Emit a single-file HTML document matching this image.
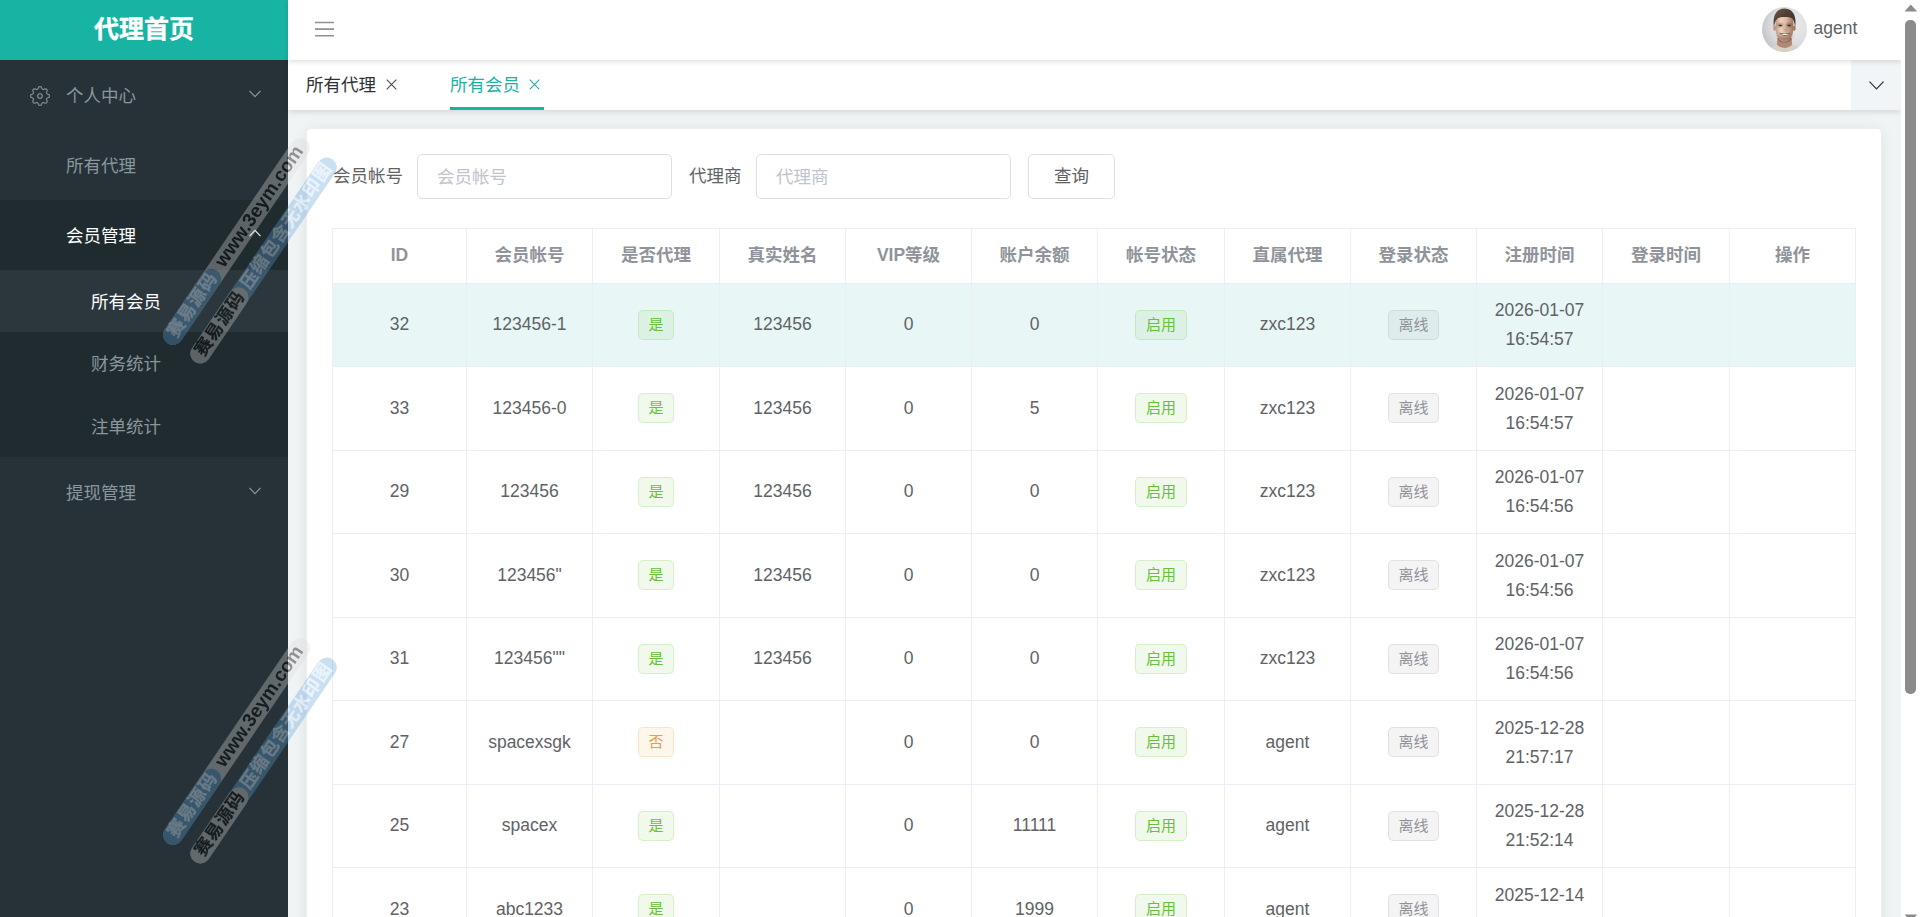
<!DOCTYPE html>
<html lang="zh-CN">
<head>
<meta charset="utf-8">
<title>代理首页</title>
<style>
*{box-sizing:border-box;margin:0;padding:0}
html,body{width:1920px;height:917px;overflow:hidden;background:#f1f4f5}
body{position:relative;font-family:"Liberation Sans","Noto Sans CJK SC",sans-serif;font-size:17.5px;color:#606266}
/* sidebar */
#side{position:absolute;left:0;top:0;width:288px;height:917px;background:#263238;overflow:hidden}
#brand{position:absolute;left:0;top:0;width:288px;height:60px;background:#17b3a3;color:#fff;font-weight:700;font-size:25px;line-height:60px;text-align:center}
#brand span{position:relative;top:-1.3px;-webkit-text-stroke:.35px #fff}
.mi{position:absolute;left:0;width:288px;color:#8a979e;font-size:17.5px;white-space:nowrap}
.mi b{font-weight:400;position:absolute;top:50%;transform:translateY(-50%);margin-top:-1px}
.mi svg{position:absolute}
.m1{height:70px}
.m2{height:62.5px;background:#202b30}
/* navbar */
#nav{position:absolute;left:288px;top:0;width:1613px;height:60px;background:#fff;z-index:3;box-shadow:0 2px 5px rgba(0,0,0,.12)}
#nav .name{position:absolute;left:1525.5px;top:0;line-height:56px;font-size:17.5px;color:#5f6368}
#tabs{position:absolute;left:288px;top:60px;width:1613px;height:50px;background:#fff;z-index:2;box-shadow:0 2px 6px rgba(0,0,0,.12)}
.tab{position:absolute;top:0;height:50px;line-height:50px;font-size:17.5px;color:#303133;white-space:nowrap}
.tab svg{position:absolute;top:18.5px;margin-left:-.55px}
.tab.on{color:#17b3a3}
#ul{position:absolute;left:162px;top:47px;width:94px;height:3px;background:#17b3a3}
#more{position:absolute;left:1563px;top:0;width:50px;height:50px;background:#f1f5f7}
/* card */
#card{position:absolute;left:306px;top:127.5px;width:1575.6px;height:810px;background:#fff;border-radius:5px;border:1px solid #ebeef5;box-shadow:0 2px 15px rgba(0,0,0,.075)}
.lbl{position:absolute;font-size:17.5px;color:#606266;white-space:nowrap;line-height:42px;top:155px}
.inp{position:absolute;top:154px;height:45px;border:1px solid #dcdfe6;border-radius:5px;background:#fff;color:#c0c4cc;font-size:17.5px;line-height:45px;padding-left:19px;white-space:nowrap}
.btn{position:absolute;top:154px;height:45px;border:1px solid #dcdfe6;border-radius:5px;background:#fff;color:#606266;font-size:17.5px;line-height:43.5px;text-align:center}
/* table */
table{position:absolute;left:332px;top:228px;width:1524px;border-collapse:separate;border-spacing:0;table-layout:fixed;border-left:1px solid #ebeef5;border-top:1px solid #ebeef5}
th,td{border-right:1px solid #ebeef5;border-bottom:1px solid #ebeef5;text-align:center;vertical-align:middle;padding:0}
th{height:55px;color:#909399;font-weight:700;font-size:17.5px;padding-bottom:2px}
td{height:83px;color:#606266;font-size:17.5px;line-height:28.75px;padding-bottom:2px}
tr.e td{height:84px;padding-bottom:0}
tr.e .tag{top:-1px}
tr.e td.d{padding-top:0;padding-bottom:0}
th i{font-style:normal;position:relative;top:-2px}
th u{text-decoration:none;position:relative;top:-2px}

td.d{padding-bottom:0}
tr.hl td{background:#e8f7f6}
.tag{display:inline-block;height:30px;line-height:27.5px;padding:0 9.5px;font-size:15px;border-radius:5px;border:1px solid;vertical-align:middle;position:relative;top:1px}
.tg{background:rgba(103,194,58,.1);border-color:rgba(103,194,58,.2);color:#67c23a}
.tw{background:rgba(230,162,60,.1);border-color:rgba(230,162,60,.2);color:#e6a23c}
.ti{background:rgba(144,147,153,.1);border-color:rgba(144,147,153,.2);color:#909399}
/* scrollbar */
#sb{position:absolute;left:1901px;top:0;width:19px;height:917px;background:#fff;z-index:9}
#sb i{position:absolute;left:4.3px;top:19.6px;width:10.4px;height:674px;border-radius:5px;background:#8b8b8b}
#sb svg{position:absolute;left:2px}
/* watermark */
.wm{position:absolute;left:0;top:0;width:0;height:0;z-index:8;opacity:.4;transform-origin:0 0;transform:rotate(-55.8deg);font-weight:700;font-size:17.5px;white-space:nowrap;line-height:20px}
.wm div{position:absolute;height:20px;border-radius:10px}
.wm span{position:absolute}
.cb{background:#5aa0d7}
.cg{background:#dadada}
.o8{opacity:.82}
.tk{color:#000}
.tl{color:#cfe6fa;letter-spacing:1px;-webkit-text-stroke:.25px #cfe6fa}
.tk.cn{letter-spacing:1px;-webkit-text-stroke:.25px #000}
</style>
</head>
<body>
<div id="side">
  <div id="brand"><span>代理首页</span></div>
  <div class="mi m1" style="top:60px">
    <svg style="left:30px;top:26px" width="20" height="20" viewBox="0 0 20 20" fill="none" stroke="#8a979e" stroke-width="1.05" stroke-linejoin="round"><path d="M10.00 0.60L10.61 0.66L11.19 0.97L11.63 1.81L11.97 2.67L12.36 3.04L12.79 3.26L13.25 3.41L13.80 3.42L14.64 3.06L15.54 2.78L16.17 2.97L16.65 3.35L17.03 3.83L17.22 4.46L16.94 5.36L16.58 6.20L16.59 6.75L16.74 7.21L16.96 7.64L17.33 8.03L18.19 8.37L19.03 8.81L19.34 9.39L19.40 10.00L19.34 10.61L19.03 11.19L18.19 11.63L17.33 11.97L16.96 12.36L16.74 12.79L16.59 13.25L16.58 13.80L16.94 14.64L17.22 15.54L17.03 16.17L16.65 16.65L16.17 17.03L15.54 17.22L14.64 16.94L13.80 16.58L13.25 16.59L12.79 16.74L12.36 16.96L11.97 17.33L11.63 18.19L11.19 19.03L10.61 19.34L10.00 19.40L9.39 19.34L8.81 19.03L8.37 18.19L8.03 17.33L7.64 16.96L7.21 16.74L6.75 16.59L6.20 16.58L5.36 16.94L4.46 17.22L3.83 17.03L3.35 16.65L2.97 16.17L2.78 15.54L3.06 14.64L3.42 13.80L3.41 13.25L3.26 12.79L3.04 12.36L2.67 11.97L1.81 11.63L0.97 11.19L0.66 10.61L0.60 10.00L0.66 9.39L0.97 8.81L1.81 8.37L2.67 8.03L3.04 7.64L3.26 7.21L3.41 6.75L3.42 6.20L3.06 5.36L2.78 4.46L2.97 3.83L3.35 3.35L3.83 2.97L4.46 2.78L5.36 3.06L6.20 3.42L6.75 3.41L7.21 3.26L7.64 3.04L8.03 2.67L8.37 1.81L8.81 0.97L9.39 0.66Z"/><circle cx="10" cy="10" r="2.3"/></svg>
    <b style="left:66px">个人中心</b>
    <svg style="left:249px;top:30px" width="12" height="8" viewBox="0 0 12 8" fill="none" stroke="#8a979e" stroke-width="1.2"><path d="M0.5 0.8 L6 6.6 L11.5 0.8"/></svg>
  </div>
  <div class="mi m1" style="top:130px"><b style="left:66px">所有代理</b></div>
  <div class="mi m1" style="top:200px;background:#202b30;color:#fff"><b style="left:66px">会员管理</b>
    <svg style="left:249px;top:29px" width="12" height="8" viewBox="0 0 12 8" fill="none" stroke="#e8eaeb" stroke-width="1.2"><path d="M0.5 7.2 L6 1.4 L11.5 7.2"/></svg>
  </div>
  <div class="mi m2" style="top:270px;background:#2b373d;color:#fff"><b style="left:91px">所有会员</b></div>
  <div class="mi m2" style="top:332px"><b style="left:91px">财务统计</b></div>
  <div class="mi m2" style="top:394.5px"><b style="left:91px">注单统计</b></div>
  <div class="mi m1" style="top:456.5px"><b style="left:66px">提现管理</b>
    <svg style="left:249px;top:30px" width="12" height="8" viewBox="0 0 12 8" fill="none" stroke="#8a979e" stroke-width="1.2"><path d="M0.5 0.8 L6 6.6 L11.5 0.8"/></svg>
  </div>
</div>
<div id="nav">
  <svg style="position:absolute;left:26.8px;top:21px" width="20" height="17" viewBox="0 0 20 17" fill="none" stroke="#8f9196" stroke-width="1.6"><path d="M0 1.5H19M0 8.1H19M0 14.7H19"/></svg>
  <svg style="position:absolute;left:1474px;top:7px" width="45" height="45" viewBox="0 0 45 45">
    <defs><clipPath id="av"><circle cx="22.5" cy="22.5" r="22.5"/></clipPath>
    <radialGradient id="avbg" cx="66%" cy="40%" r="75%"><stop offset="0" stop-color="#ececee"/><stop offset=".6" stop-color="#dcdcdf"/><stop offset="1" stop-color="#bebfc4"/></radialGradient>
    <linearGradient id="sk" x1="0" y1="0" x2="1" y2="0"><stop offset="0" stop-color="#c39a83"/><stop offset=".28" stop-color="#ecd2c0"/><stop offset=".6" stop-color="#dcbaa5"/><stop offset="1" stop-color="#9c7560"/></linearGradient>
    <linearGradient id="hr" x1="0" y1="0" x2="1" y2="1"><stop offset="0" stop-color="#6a5748"/><stop offset=".5" stop-color="#4d3c31"/><stop offset="1" stop-color="#3d2f27"/></linearGradient>
    <filter id="bl" x="-10%" y="-10%" width="120%" height="120%"><feGaussianBlur stdDeviation=".6"/></filter>
    <filter id="bl2" x="-30%" y="-30%" width="160%" height="160%"><feGaussianBlur stdDeviation="1.1"/></filter></defs>
    <g clip-path="url(#av)">
      <rect width="45" height="45" fill="url(#avbg)"/>
      <g filter="url(#bl)">
      <path d="M5 46 C6.5 40.5 11.5 39 15 37.4 L30 37.2 C33.5 38.4 38.8 39.8 40.5 46Z" fill="#d8d2c5"/>
      <path d="M15.6 31 L14.8 37.6 C18 42 27 42 30.2 37.4 L29.6 31Z" fill="#b08a74"/>
      <path d="M15.8 33 C19 36.5 26 36.5 29.4 33 L29.6 31 L15.6 31Z" fill="#8d6a57" opacity=".7"/>
      <ellipse cx="12.7" cy="21.3" rx="1.5" ry="2.7" fill="#c0967f"/><ellipse cx="32.3" cy="21.3" rx="1.4" ry="2.7" fill="#9f7862"/>
      <path d="M13.6 14 C13.6 8 18 7 22.5 7 C27 7 31.4 8 31.4 14 L31.3 23 C30.8 29.5 26.6 34.8 22.5 34.8 C18.4 34.8 14.2 29.5 13.7 23Z" fill="url(#sk)"/>
      <path d="M11.9 20 C10.2 9 14.6 1.6 22.3 1.6 C30.8 1.6 34.9 9 33.1 20 C32.6 16.5 32 13.4 30.2 11.3 C26.5 9.4 19 9.5 15.4 11.4 C13.4 13.4 12.6 16.5 11.9 20Z" fill="url(#hr)"/>
      </g>
      <g filter="url(#bl2)">
      <ellipse cx="18.2" cy="18" rx="3" ry="1.5" fill="#7d5b49" opacity=".75"/><ellipse cx="27.1" cy="18" rx="3" ry="1.5" fill="#6d4e3f" opacity=".8"/>
      <path d="M14.5 26 C16 33 19.5 35 22.5 35 C25.5 35 29.5 33 30.8 26 C28 30.5 17.5 30.5 14.5 26Z" fill="#8a6654" opacity=".7"/>
      <ellipse cx="24" cy="22.8" rx="1.6" ry="2.3" fill="#a27b66" opacity=".6"/>
      </g>
      <g filter="url(#bl)">
      <ellipse cx="18.3" cy="18.4" rx="1.7" ry=".75" fill="#3b2a22"/><ellipse cx="27.1" cy="18.4" rx="1.7" ry=".75" fill="#3b2a22"/>
      <path d="M17 25.6 C19.5 29.9 26 29.9 28.6 25.6 C25.5 27 20 27 17 25.6Z" fill="#65402f"/>
      <path d="M18.3 26.4 C20.4 28.6 25.2 28.6 27.3 26.4 C25 27.3 20.6 27.3 18.3 26.4Z" fill="#f8f2ec"/>
      </g>
    </g>
  </svg>
  <span class="name">agent</span>
</div>
<div id="tabs">
  <div class="tab" style="left:18px">所有代理<svg style="left:80.7px" width="11" height="11" viewBox="0 0 11 11" stroke="#4a4c50" stroke-width="1.1"><path d="M0.7 0.7L10.3 10.3M10.3 0.7L0.7 10.3"/></svg></div>
  <div class="tab on" style="left:162px">所有会员<svg style="left:79.5px" width="11" height="11" viewBox="0 0 11 11" stroke="#17b3a3" stroke-width="1.1"><path d="M0.7 0.7L10.3 10.3M10.3 0.7L0.7 10.3"/></svg></div>
  <div id="ul"></div>
  <div id="more"><svg style="position:absolute;left:17.5px;top:21.1px" width="15" height="9" viewBox="0 0 15 9" fill="none" stroke="#303133" stroke-width="1.2"><path d="M0.5 0.6 L7.5 7.9 L14.5 0.6"/></svg></div>
</div>
<div id="card"></div>
<span class="lbl" style="left:333px">会员帐号</span>
<div class="inp" style="left:417px;width:255px">会员帐号</div>
<span class="lbl" style="left:689px">代理商</span>
<div class="inp" style="left:756px;width:255px">代理商</div>
<div class="btn" style="left:1028px;width:87px">查询</div>
<table>
<colgroup><col style="width:134px"><col style="width:126px"><col style="width:127px"><col style="width:126px"><col style="width:126px"><col style="width:126px"><col style="width:127px"><col style="width:126px"><col style="width:126px"><col style="width:126px"><col style="width:127px"><col style="width:126px"></colgroup>
<thead><tr><th>ID</th><th><i>会员帐号</i></th><th><i>是否代理</i></th><th><i>真实姓名</i></th><th class="m"><u>VIP</u><i>等级</i></th><th><i>账户余额</i></th><th><i>帐号状态</i></th><th><i>直属代理</i></th><th><i>登录状态</i></th><th><i>注册时间</i></th><th><i>登录时间</i></th><th><i>操作</i></th></tr></thead><tbody>
<tr class="hl"><td>32</td><td>123456-1</td><td><span class="tag tg">是</span></td><td>123456</td><td>0</td><td>0</td><td><span class="tag tg">启用</span></td><td>zxc123</td><td><span class="tag ti">离线</span></td><td class="d">2026-01-07<br>16:54:57</td><td></td><td></td></tr>
<tr class="e"><td>33</td><td>123456-0</td><td><span class="tag tg">是</span></td><td>123456</td><td>0</td><td>5</td><td><span class="tag tg">启用</span></td><td>zxc123</td><td><span class="tag ti">离线</span></td><td class="d">2026-01-07<br>16:54:57</td><td></td><td></td></tr>
<tr><td>29</td><td>123456</td><td><span class="tag tg">是</span></td><td>123456</td><td>0</td><td>0</td><td><span class="tag tg">启用</span></td><td>zxc123</td><td><span class="tag ti">离线</span></td><td class="d">2026-01-07<br>16:54:56</td><td></td><td></td></tr>
<tr class="e"><td>30</td><td>123456&quot;</td><td><span class="tag tg">是</span></td><td>123456</td><td>0</td><td>0</td><td><span class="tag tg">启用</span></td><td>zxc123</td><td><span class="tag ti">离线</span></td><td class="d">2026-01-07<br>16:54:56</td><td></td><td></td></tr>
<tr><td>31</td><td>123456&quot;&quot;</td><td><span class="tag tg">是</span></td><td>123456</td><td>0</td><td>0</td><td><span class="tag tg">启用</span></td><td>zxc123</td><td><span class="tag ti">离线</span></td><td class="d">2026-01-07<br>16:54:56</td><td></td><td></td></tr>
<tr class="e"><td>27</td><td>spacexsgk</td><td><span class="tag tw">否</span></td><td></td><td>0</td><td>0</td><td><span class="tag tg">启用</span></td><td>agent</td><td><span class="tag ti">离线</span></td><td class="d">2025-12-28<br>21:57:17</td><td></td><td></td></tr>
<tr><td>25</td><td>spacex</td><td><span class="tag tg">是</span></td><td></td><td>0</td><td>11111</td><td><span class="tag tg">启用</span></td><td>agent</td><td><span class="tag ti">离线</span></td><td class="d">2025-12-28<br>21:52:14</td><td></td><td></td></tr>
<tr class="e"><td>23</td><td>abc1233</td><td><span class="tag tg">是</span></td><td></td><td>0</td><td>1999</td><td><span class="tag tg">启用</span></td><td>agent</td><td><span class="tag ti">离线</span></td><td class="d">2025-12-14<br>16:07:24</td><td></td><td></td></tr>
</tbody></table>
<div class="wm" style="left:173px;top:335px">
  <div class="o8" style="left:0;top:0;width:0;height:0">
  <div class="cg" style="left:-10px;top:-10px;width:246px"></div>
  <div class="cb" style="left:-10px;top:-10px;width:88px"></div>
  <div class="cb" style="left:-10px;top:23px;width:245px"></div>
  <div class="cg" style="left:-10px;top:23px;width:88px"></div>
  </div>
  <span class="tl" style="left:-1px;top:-11px">赛易源码</span>
  <span class="tk" style="left:84px;top:-11px;font-size:19px">www.3eym.com</span>
  <span class="tk cn" style="left:-1px;top:22px">赛易源码</span>
  <span class="tl" style="left:80px;top:22px">压缩包含无水印图</span>
</div>
<div class="wm" style="left:173px;top:835px">
  <div class="o8" style="left:0;top:0;width:0;height:0">
  <div class="cg" style="left:-10px;top:-10px;width:246px"></div>
  <div class="cb" style="left:-10px;top:-10px;width:88px"></div>
  <div class="cb" style="left:-10px;top:23px;width:245px"></div>
  <div class="cg" style="left:-10px;top:23px;width:88px"></div>
  </div>
  <span class="tl" style="left:-1px;top:-11px">赛易源码</span>
  <span class="tk" style="left:84px;top:-11px;font-size:19px">www.3eym.com</span>
  <span class="tk cn" style="left:-1px;top:22px">赛易源码</span>
  <span class="tl" style="left:80px;top:22px">压缩包含无水印图</span>
</div>
<div id="sb"><svg style="top:4.3px;left:1.5px" width="17" height="8" viewBox="0 0 17 8"><path d="M1.5 7.5 L7.8 0.5 L14.2 7.5Z" fill="#8b8b8b"/></svg><i></i><svg style="top:913.8px;left:1.5px" width="17" height="8" viewBox="0 0 17 8"><path d="M1.5 0.5 L7.8 7.5 L14.2 0.5Z" fill="#8b8b8b"/></svg></div>
</body>
</html>
